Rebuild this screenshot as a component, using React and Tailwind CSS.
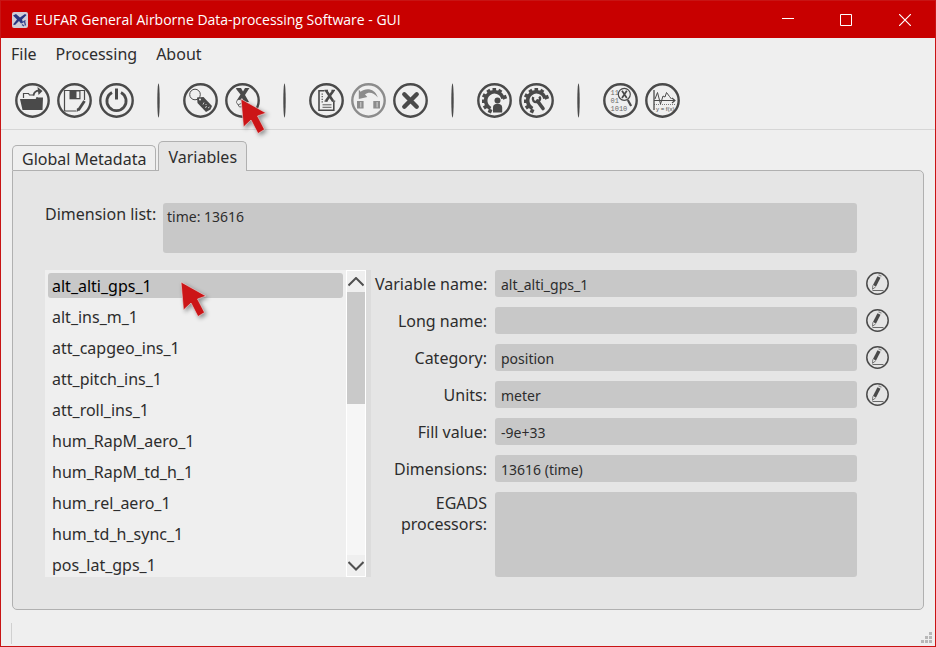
import React, { useState } from 'react';

const INK = '#4a4a4a';

function Ring({ color = INK, children }) {
  return (
    <svg className="block size-[35px]" viewBox="0 0 35 35" fill="none" stroke={color} aria-hidden="true">
      <circle cx="17.5" cy="17.5" r="16.2" strokeWidth="2.4" />
      {children}
    </svg>
  );
}

const OpenIcon = () => (
  <Ring>
    <path d="M8.500 15V10.500h5l1 1.500H19M22 14v2" strokeWidth="1.200" />
    <path d="M5 16h15.500l1.500-1.500h6L27.500 27H7.500z" fill={INK} stroke="none" />
    <path d="M18.500 12.500c.5-3 2.500-4.800 5.500-4.800" strokeWidth="1.800" />
    <path d="M22.500 4l5 4-4 4z" fill={INK} stroke="none" />
  </Ring>
);

const SaveIcon = () => (
  <Ring>
    <path d="M19 28H8.500Q7.500 28 7.500 27V7.500h20V17" strokeWidth="1.200" />
    <path d="M12.500 7.500h11v8.800h-11z" fill={INK} stroke="none" />
    <path d="M19.500 8.500h2.800v6.500h-2.800z" fill="#efefef" stroke="none" />
    <path d="M27.500 18L21.500 27" strokeWidth="2.800" />
    <path d="M20 25l3 2-3.500 2z" fill={INK} stroke="none" />
  </Ring>
);

const PowerIcon = () => (
  <Ring>
    <path d="M13 9.500a9.600 9.600 0 1 0 9 0" strokeWidth="2.800" />
    <path d="M17.500 5.500v11" strokeWidth="3" />
  </Ring>
);

const TagIcon = () => (
  <Ring>
    <circle cx="12" cy="11.500" r="5.300" strokeWidth="1" />
    <path d="M14 14.500l6.500-.5 8.500 9-1.500 3.500-4.500 2.500-8.500-9z" fill={INK} stroke="none" />
    <circle cx="17" cy="16.500" r="1" fill="#efefef" stroke="none" />
    <path d="M20 21.500l1-2M22.500 21l1 1M22 24.500l2-1M25 25l1.500-1" stroke="#efefef" strokeWidth=".8" />
  </Ring>
);

const VariableIcon = () => (
  <Ring>
    <path d="M11 5h5l2 3.500L20 5h4.500l-1 1.500L20 12l4 7h-5l-2-4-2 3-3-1 3.500-5.500L11.500 6.500z" fill={INK} stroke="none" />
    <path d="M11.500 19.500c0-3 3-4 5-2l2 6-4 .5z" fill="#efefef" strokeWidth=".8" />
    <path d="M13 22l4-2" strokeWidth=".8" />
  </Ring>
);

const DocIcon = () => (
  <Ring>
    <path d="M15.500 7.800H10v19.500h14.800V18.500" strokeWidth="1.600" />
    <path d="M13.200 10.500v9" strokeWidth="1.200" strokeDasharray="1.200 1.400" />
    <path d="M13.500 21.800h9M13.500 24.300h9" strokeWidth=".9" />
    <path d="M17 7.500l7 10.500M24.500 7.500L17 18" strokeWidth="2.600" />
    <path d="M15.500 7.300h3.500M22.500 7.300H26M15.500 18.200h3M23 18.200h3.200" strokeWidth="1.200" />
  </Ring>
);

const UndoIcon = () => (
  <Ring color="#8c8c8c">
    <path d="M7.800 6.500l1.700 2.300C15 4.500 24 5.500 26.800 14.500 23 9.500 17.500 8.500 14 11.500l2.300 2.500-8.500 2z" fill="#8c8c8c" stroke="none" />
    <path d="M6 18h6.600v7.400H6zM22.300 18H29v7.400h-6.700z" fill="#8c8c8c" stroke="none" />
    <path d="M9.800 19v5.400M26.100 19v5.400" stroke="#dcdcdc" strokeWidth=".9" />
  </Ring>
);

const CloseIcon = () => (
  <Ring>
    <path d="M11.300 11.300l12.400 12.400M23.700 11.300L11.300 23.700" strokeWidth="4.400" strokeLinecap="round" />
  </Ring>
);

function Gear() {
  return (
    <>
      <path d="M13.500 25.500A8.800 8.800 0 1 1 26 15.500" strokeWidth="3.600" />
      <path
        d="M17.300 5v4M10.800 6.800l2 3.200M5.800 11.800l3.600 1.900M5 18.300h4M6.800 25l3.400-2.200M12.300 29.800l1.500-3.500M23.800 6.800l-2 3.200M29.500 13.500l-4 1.500"
        strokeWidth="3.600"
      />
    </>
  );
}

const GearUserIcon = () => (
  <Ring>
    <Gear />
    <circle cx="20.500" cy="17.500" r="3" fill={INK} stroke="none" />
    <path d="M16 29.500v-5c0-2.500 1.700-3.700 4.500-3.700s4.700 1.200 4.700 3.700v5z" fill={INK} stroke="none" />
  </Ring>
);

const GearToolIcon = () => (
  <Ring>
    <Gear />
    <path d="M18.500 18l5.500 7.500" strokeWidth="3.600" strokeLinecap="round" />
    <path d="M14.300 14c-1.500 3 .8 5.800 4 5 2.800-.8 3.500-3.600 2-5.500" strokeWidth="2.400" />
  </Ring>
);

const BinaryIcon = () => (
  <Ring>
    <g fill="#6a6a6a" stroke="none" className="font-['Liberation_Mono',monospace] text-[7px]">
      <text x="7.500" y="12">11</text>
      <text x="7.500" y="20">01</text>
      <text x="7.500" y="28">1010</text>
    </g>
    <circle cx="21.300" cy="11.300" r="6" fill="#efefef" strokeWidth="1.200" />
    <path d="M19 7.700l4.800 7.300M23.800 7.700L19 15" strokeWidth="1.700" />
    <path d="M24.800 17l3.300 6" strokeWidth="2.200" />
  </Ring>
);

const GraphIcon = () => (
  <Ring>
    <path d="M9 7v20" strokeWidth="1.300" />
    <path d="M9 17.500h20.500M27 15l3 2.500-3 2.500" strokeWidth="1.100" />
    <path d="M10 16l2.500-6.500 3 11.500 2.500-8 2 1 1.500-4.500 3 4 2 2.500" strokeWidth="1" />
    <path d="M9 21.500h21" strokeWidth=".7" strokeDasharray="1 1" />
    <text x="11" y="28" fill={INK} stroke="none" className="font-['Liberation_Sans',sans-serif] text-[6px]">y = f(x)</text>
  </Ring>
);

const Separator = () => (
  <div className="flex w-[42px] justify-center" role="separator">
    <svg className="block h-[35px] w-[3px]" viewBox="0 0 3 35" aria-hidden="true">
      <ellipse cx="1.500" cy="17.500" rx="1.200" ry="17" fill={INK} />
    </svg>
  </div>
);

function EditButton({ label }) {
  return (
    <button type="button" aria-label={'Edit ' + label} className="shrink-0">
      <svg className="block size-[23px]" viewBox="0 0 23 23" fill="none" stroke={INK} aria-hidden="true">
        <circle cx="11.500" cy="11.500" r="10.700" strokeWidth="1.500" />
        <path d="M13 5L8.500 13.800" strokeWidth="3.400" />
        <path d="M12.500 2.800l3 1.500" strokeWidth="1.200" stroke="#8a8a8a" />
        <path d="M6.800 13.300l-.3 4 3.200-2.500" strokeWidth=".7" />
        <path d="M6.500 18.500h11" strokeWidth=".8" />
      </svg>
    </button>
  );
}

function Pointer() {
  return (
    <svg
      className="block h-[40px] w-[32px] overflow-visible drop-shadow-[2px_2px_2px_rgba(0,0,0,0.4)]"
      viewBox="0 0 32 40"
      aria-hidden="true"
    >
      <path d="M0 0L25 14 16.500 17 23.500 30.500 17 34.500 10 21 2.500 28z" fill="#cc1517" stroke="#e9dede" strokeWidth=".6" />
    </svg>
  );
}

const tools = [
  ['Open', OpenIcon], ['Save', SaveIcon], ['Quit', PowerIcon], null,
  ['Global metadata', TagIcon], ['Variable metadata', VariableIcon], null,
  ['New variable', DocIcon], ['Undo', UndoIcon], ['Delete', CloseIcon], null,
  ['Create algorithm', GearUserIcon], ['Run algorithm', GearToolIcon], null,
  ['Display data', BinaryIcon], ['Plot data', GraphIcon],
];

const variables = [
  'alt_alti_gps_1', 'alt_ins_m_1', 'att_capgeo_ins_1', 'att_pitch_ins_1', 'att_roll_ins_1',
  'hum_RapM_aero_1', 'hum_RapM_td_h_1', 'hum_rel_aero_1', 'hum_td_h_sync_1', 'pos_lat_gps_1',
];

const fields = [
  { id: 'name', label: 'Variable name:', value: 'alt_alti_gps_1', edit: true },
  { id: 'long', label: 'Long name:', value: '', edit: true },
  { id: 'category', label: 'Category:', value: 'position', edit: true },
  { id: 'units', label: 'Units:', value: 'meter', edit: true },
  { id: 'fill', label: 'Fill value:', value: '-9e+33' },
  { id: 'dims', label: 'Dimensions:', value: '13616 (time)' },
];

function TitleBar() {
  return (
    <header className="flex h-[37px] items-center bg-[#c80000] pl-[11px] text-white">
      <svg className="block size-4" viewBox="0 0 16 16" aria-hidden="true">
        <rect width="16" height="16" rx="2" fill="#cfcdd6" />
        <path d="M1 3.500L4 2l4 3.500L13 2l1.500 1L10 7.500l1 3-2 1L7 9l-4 4-2-.5L5 7.500z" fill="#2a3580" />
        <path d="M9.500 11l4-2.500M12.500 9.500l1 4M10 12.500l2 1.500" stroke="#3d4890" strokeWidth="1.300" />
      </svg>
      <h1 className="flex-1 pl-[7px] font-['Open_Sans','Noto_Sans',sans-serif] text-[14px]">
        EUFAR General Airborne Data-processing Software - GUI
      </h1>
      <button type="button" aria-label="Minimize" className="flex w-[58px] justify-center">
        <svg className="size-3" viewBox="0 0 12 12" stroke="white"><path d="M0 4.500h12" /></svg>
      </button>
      <button type="button" aria-label="Maximize" className="flex w-[58px] justify-center">
        <svg className="size-3" viewBox="0 0 12 12" stroke="white" fill="none"><path d="M.5.5h11v11H.5z" /></svg>
      </button>
      <button type="button" aria-label="Close" className="flex w-[60px] justify-center">
        <svg className="size-3" viewBox="0 0 12 12" stroke="white" strokeWidth="1.200"><path d="M0 0l12 12M12 0L0 12" /></svg>
      </button>
    </header>
  );
}

function VariableList() {
  const [selected, setSelected] = useState(variables[0]);
  return (
    <div className="flex h-[307px] w-[326px] shrink-0 border-r-[5px] border-[#dcdcdc] bg-[#efefef]">
      <ul className="flex flex-1 flex-col gap-[6px] overflow-hidden p-[3px]">
        {variables.map((name, i) => (
          <li key={name} className="relative">
            <button
              type="button"
              onClick={() => setSelected(name)}
              className={
                'block h-[25px] w-full rounded-[3px] pl-1 text-left leading-[27px] ' +
                (name === selected ? 'bg-[#c8c8c8] text-black' : '')
              }
            >
              {name}
            </button>
            {i === 0 && <div className="pointer-events-none absolute top-[9px] left-[133px] z-10"><Pointer /></div>}
          </li>
        ))}
      </ul>
      <div className="flex w-5 flex-col border border-white bg-[#f6f6f6]">
        <button type="button" aria-label="Scroll up" className="flex h-[21px] items-center justify-center bg-[#efefef]">
          <svg className="h-[10px] w-4" viewBox="0 0 16 10" fill="none" stroke="#505050" strokeWidth="2"><path d="M.5 8.500L8 1l7.500 7.500" /></svg>
        </button>
        <div className="h-[112px] bg-[#c9c9c9]" />
        <div className="flex-1" />
        <button type="button" aria-label="Scroll down" className="flex h-[21px] items-center justify-center bg-[#efefef]">
          <svg className="h-[10px] w-4" viewBox="0 0 16 10" fill="none" stroke="#505050" strokeWidth="2"><path d="M.5 1L8 8.500 15.500 1" /></svg>
        </button>
      </div>
    </div>
  );
}

export default function App() {
  return (
    <div className="flex min-h-screen flex-col border border-[#c81414] bg-[#efefef] font-['Noto_Sans',sans-serif] text-[16px] text-[#2d2d2d]">
      <TitleBar />
      <nav className="flex h-8 items-center gap-[19px] px-[10px]">
        <button type="button">File</button>
        <button type="button">Processing</button>
        <button type="button">About</button>
      </nav>
      <div className="flex h-[60px] items-center border-b border-[#d6d6d6] pt-[2px] pl-[10px]" role="toolbar">
        {tools.map((tool, i) => {
          if (!tool) return <Separator key={i} />;
          const [label, Icon] = tool;
          return (
            <div key={i} className="relative flex w-[42px] justify-center">
              <button type="button" aria-label={label}><Icon /></button>
              {label === 'Variable metadata' && (
                <div className="pointer-events-none absolute top-4 left-5 z-10"><Pointer /></div>
              )}
            </div>
          );
        })}
      </div>

      <main className="flex flex-1 flex-col px-[11px] pt-[11px]">
        <div className="flex items-end gap-[2px]" role="tablist">
          <button type="button" role="tab" className="h-[25px] rounded-t-[5px] border border-b-0 border-[#b0b0b0] px-[9px] leading-[26px]">
            Global Metadata
          </button>
          <button type="button" role="tab" aria-selected="true" className="z-10 -mb-px h-[30px] rounded-t-[5px] border border-b-0 border-[#b0b0b0] bg-[#e5e5e5] px-[9px] leading-[30px]">
            Variables
          </button>
        </div>
        <section className="rounded-[5px] rounded-tl-none border border-[#b0b0b0] bg-[#e5e5e5] py-8 pr-[34px] pl-8">
          <div className="flex gap-2 pr-8">
            <label htmlFor="dimlist" className="w-[110px] shrink-0 leading-[22px] whitespace-nowrap">Dimension list:</label>
            <textarea id="dimlist" readOnly defaultValue="time: 13616" className="h-[50px] min-w-0 flex-1 resize-none rounded-[3px] bg-[#c8c8c8] px-1 py-1 text-[14px] leading-5" />
          </div>
          <div className="mt-[17px] flex gap-1">
            <VariableList />
            <div className="flex min-w-0 flex-1 flex-col gap-[10px]">
              {fields.map((f) => (
                <div key={f.id} className="flex items-center gap-[9px]">
                  <div className="flex flex-1 items-center gap-2">
                    <label htmlFor={f.id} className="w-[112px] shrink-0 text-right whitespace-nowrap">{f.label}</label>
                    <input id={f.id} readOnly defaultValue={f.value} className="h-[27px] min-w-0 flex-1 rounded-[3px] bg-[#c8c8c8] px-[6px] pt-[2px] text-[14px]" />
                  </div>
                  {f.edit ? <EditButton label={f.label} /> : <div className="w-[23px]" />}
                </div>
              ))}
              <div className="flex gap-2 pr-8">
                <label htmlFor="egads" className="w-[112px] shrink-0 pt-px text-right leading-[21px]">EGADS processors:</label>
                <textarea id="egads" readOnly className="h-[85px] min-w-0 flex-1 resize-none rounded-[3px] bg-[#c8c8c8]" />
              </div>
            </div>
          </div>
        </section>
      </main>

      <footer className="flex items-end justify-between px-[10px] pr-[3px] pb-[2px]">
        <div className="h-[21px] w-px bg-[#d0d0d0]" />
        <svg className="block h-3 w-[11px]" viewBox="0 0 11 12" fill="#b8b8b8" aria-hidden="true">
          <path d="M8 0h3v3H8zM4 4h3v3H4zM8 4h3v3H8zM0 8h3v3H0zM4 8h3v3H4zM8 8h3v3H8z" />
        </svg>
      </footer>
    </div>
  );
}
